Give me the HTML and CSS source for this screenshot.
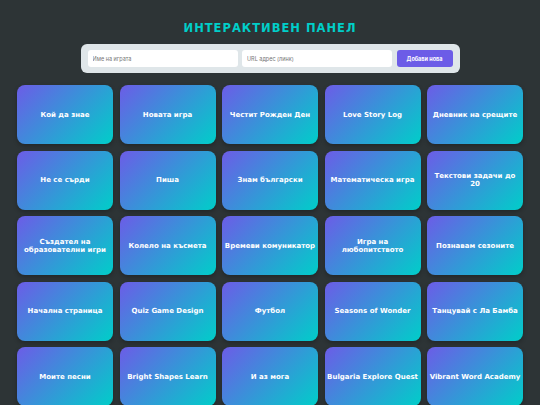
FILE: index.html
```html
<!DOCTYPE html>
<html lang="bg">
<head>
<meta charset="utf-8">
<link rel="stylesheet" href="styles.css">
</head>
<body>
<h1 class="title">ИНТЕРАКТИВЕН ПАНЕЛ</h1>
<form class="add-form">
  <input class="field" type="text" placeholder="Име на играта">
  <input class="field" type="text" placeholder="URL адрес (линк)">
  <button class="add-btn" type="button">Добави нова</button>
</form>
<div class="grid">
  <a class="card">Кой да знае</a>
  <a class="card">Новата игра</a>
  <a class="card">Честит Рожден Ден</a>
  <a class="card">Love Story Log</a>
  <a class="card">Дневник на срещите</a>
  <a class="card">Не се сърди</a>
  <a class="card">Пиша</a>
  <a class="card">Знам български</a>
  <a class="card">Математическа игра</a>
  <a class="card">Текстови задачи до 20</a>
  <a class="card">Създател на образователни игри</a>
  <a class="card">Колело на късмета</a>
  <a class="card">Времеви комуникатор</a>
  <a class="card">Игра на любопитството</a>
  <a class="card">Познавам сезоните</a>
  <a class="card">Начална страница</a>
  <a class="card">Quiz Game Design</a>
  <a class="card">Футбол</a>
  <a class="card">Seasons of Wonder</a>
  <a class="card">Танцувай с Ла Бамба</a>
  <a class="card">Моите песни</a>
  <a class="card">Bright Shapes Learn</a>
  <a class="card">И аз мога</a>
  <a class="card">Bulgaria Explore Quest</a>
  <a class="card">Vibrant Word Academy</a>
</div>
</body>
</html>
```
FILE: styles.css
```css
html, body {
  margin: 0;
  padding: 0;
  background: #2d3436;
}
body {
  font-family: "DejaVu Sans", Verdana, sans-serif;
  padding: 20px 17px 0;
}
.title {
  margin: 0 0 8px;
  text-align: center;
  color: #00cec9;
  font-size: 11.5px;
  line-height: 16px;
  letter-spacing: 1px;
  font-weight: bold;
}
.add-form {
  width: 365px;
  margin: 0 auto 12px;
  background: #dfe6e9;
  border-radius: 6px;
  padding: 6px 7px;
  display: flex;
  gap: 4.5px;
  box-sizing: content-box;
}
.field {
  flex: 1;
  height: 17px;
  border: none;
  border-radius: 3px;
  background: #fff;
  padding: 0 5px;
  font-family: Inter, "Liberation Sans", sans-serif;
  font-size: 5.5px;
  color: #555;
  outline: none;
  min-width: 0;
}
.field::placeholder { color: #757575; }
.add-btn {
  width: 56px;
  height: 17px;
  border: none;
  border-radius: 3px;
  background: #6c5ce7;
  color: #fff;
  font-family: Inter, "Liberation Sans", sans-serif;
  font-size: 5.5px;
  font-weight: bold;
  padding: 0;
}
.grid {
  display: grid;
  grid-template-columns: repeat(5, 1fr);
  column-gap: 6.5px;
  row-gap: 6.5px;
}
.card {
  height: 59px;
  border-radius: 8px;
  background: linear-gradient(135deg, #6c5ce7 0%, #00cec9 100%);
  color: #fff;
  font-weight: bold;
  font-size: 7px;
  line-height: 8px;
  display: flex;
  align-items: center;
  justify-content: center;
  text-align: center;
  padding: 0 2px;
  box-shadow: 0 2px 4px rgba(0,0,0,0.25);
}
```
